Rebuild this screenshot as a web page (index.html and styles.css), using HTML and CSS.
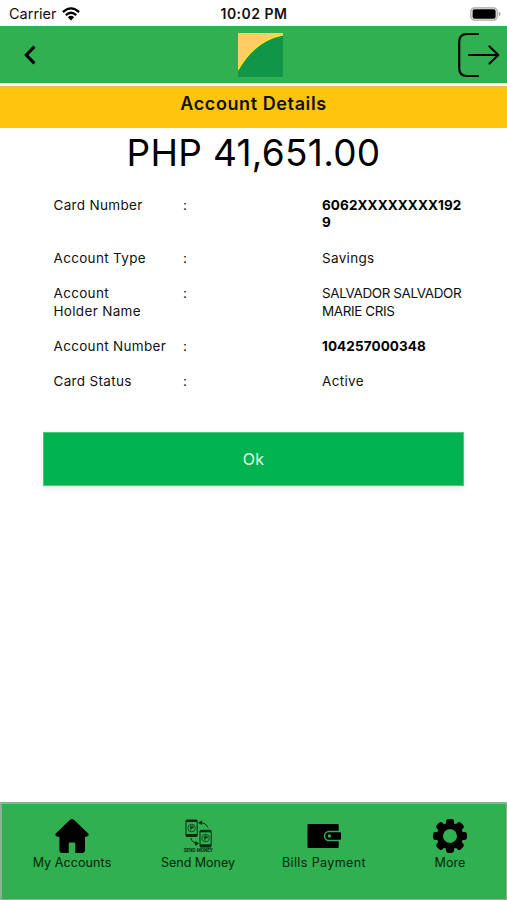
FILE: index.html
```html
<!DOCTYPE html>
<html lang="en">
<head>
<meta charset="utf-8">
<meta name="viewport" content="width=device-width, initial-scale=1">
<title>Account Details</title>
<link rel="stylesheet" href="styles.css">
</head>
<body>
<div class="screen">
  <div class="status">
    <div class="carrier"><span>Carrier</span>
      <svg class="wifi" viewBox="0 0 18 14" width="18" height="14"><g fill="none" stroke="#000" stroke-width="2.3"><path d="M.9 5.2Q9-2.4 17.1 5.2"/><path d="M3.8 8.2Q9 3.4 14.2 8.2"/></g><path d="M5.8 10.2Q9 7.5 12.2 10.2L9 13.5Z"/></svg>
    </div>
    <div class="clock">10:02 PM</div>
    <svg class="battery" viewBox="0 0 31 14" width="31" height="14"><rect x=".8" y=".8" width="26.4" height="12.4" rx="3.6" fill="#eee" stroke="#a9a9a9" stroke-width="1.2"/><rect x="2.6" y="2.2" width="23" height="9.6" rx="1.8"/><path d="M28.6 4.6Q30.6 5.2 30.6 7T28.6 9.4Z" fill="#a9a9a9"/></svg>
  </div>
  <header class="topbar">
    <svg class="back" viewBox="0 0 12 20" width="12" height="20"><path d="M10.4 1.6 2.3 10 10.4 18.4" fill="none" stroke="#000" stroke-width="3.1"/></svg>
    <svg class="logo" viewBox="0 0 45 45" width="45" height="45"><path fill="#fc6" d="M0 1H45V3C24 7 10 20 0 38Z"/><path fill="#119548" d="M45 3C24 7 10 20 0 38V45H45Z"/><path fill="none" stroke="#f5ee16" stroke-width="1.4" d="M45 2.8C24 7 10 20 0 38"/></svg>
    <svg class="logout" viewBox="0 0 42 46" width="42" height="46"><g fill="none" stroke="#000" stroke-width="2.2" stroke-linecap="round" stroke-linejoin="round"><path d="M20 2H9Q1.2 2 1.2 10V36Q1.2 44 9 44H20"/><path d="M11 23H40M31.5 14.5 40.3 23 31.5 31.5"/></g></svg>
  </header>
  <h1 class="title">Account Details</h1>
  <main>
    <div class="amount">PHP 41,651.00</div>
    <dl class="details">
      <div class="row"><dt>Card Number</dt><span>:</span><dd class="strong card">6062XXXXXXXX192<br>9</dd></div>
      <div class="row"><dt>Account Type</dt><span>:</span><dd>Savings</dd></div>
      <div class="row"><dt>Account<br>Holder Name</dt><span>:</span><dd class="caps">SALVADOR SALVADOR<br>MARIE CRIS</dd></div>
      <div class="row"><dt>Account Number</dt><span>:</span><dd class="strong number">104257000348</dd></div>
      <div class="row"><dt>Card Status</dt><span>:</span><dd>Active</dd></div>
    </dl>
    <button class="ok">Ok</button>
  </main>
  <nav class="tabs">
    <a class="tab"><svg viewBox="0 0 34 34" width="34" height="34"><path d="M17 0Q18.2 0 19.2 1L33.2 14.4Q34.5 16.8 32 17.6L30 18V31Q30 34 27 34H20.3V25Q20.3 23.6 19 23.6H15Q13.7 23.6 13.7 25V34H7Q4.4 34 4.4 31V18L2 17.6Q-.5 16.8.8 14.4L14.8 1Q15.8 0 17 0Z"/></svg><span>My Accounts</span></a>
    <a class="tab"><svg viewBox="0 0 34 34" width="34" height="34">
      <g stroke="#062c10" fill="none"><rect x="5" y="1" width="11.2" height="16.5" rx="1"/><path d="M5 2H16" stroke-width="2"/><path d="M5 16.5H16" stroke-width="3"/><rect x="19" y="11.3" width="11.2" height="16.5" rx="1"/><path d="M19 12.3H30" stroke-width="2"/><path d="M19 26.8H30" stroke-width="3"/><circle cx="10.6" cy="9" r="3.8" stroke-width=".7"/><circle cx="24.6" cy="19" r="3.8" stroke-width=".7"/><path d="M9.8 11.5V6.8H11.4Q12.8 8.2 11.3 9.3H9.8M8.7 8.2H13M23.8 21.5V16.8H25.4Q26.8 18.2 25.3 19.3H23.8M22.7 18.2H27" stroke-width=".8"/><path d="M18 3.7Q24 3 27 8.5M17 24.5Q11 24 9.8 19"/></g><path d="M17 3.7 21 1.5V6ZM18 24.6 14 22V27Z" fill="#062c10"/><text x="2.7" y="33.1" class="tiny" textLength="29" lengthAdjust="spacingAndGlyphs">SEND MONEY</text></svg><span class="send">Send Money</span></a>
    <a class="tab"><svg viewBox="0 0 34 34" width="34" height="34"><path d="M1.5 5H30.5Q31.7 5 31.7 6.2V11.8H22A5.2 5.2 0 0 0 22 22.2H31.7V27.8Q31.7 29 30.5 29H1.5Q.5 29 .5 28V6Q.5 5 1.5 5Z"/><path fill-rule="evenodd" d="M22 13.2H33Q34 13.2 34 14.2V19.8Q34 20.8 33 20.8H22A3.8 3.8 0 0 1 22 13.2ZM22.4 15.3A1.7 1.7 0 1 0 22.4 18.7 1.7 1.7 0 0 0 22.4 15.3Z"/></svg><span class="bills">Bills Payment</span></a>
    <a class="tab"><svg viewBox="0 0 34 34" width="34" height="34"><g id="teeth"><rect x="13" y="0" width="8" height="9" rx="2.4"/><rect x="13" y="25" width="8" height="9" rx="2.4"/><rect x="0" y="13" width="9" height="8" rx="2.4"/><rect x="25" y="13" width="9" height="8" rx="2.4"/></g><use href="#teeth" transform="rotate(45 17 17)"/><circle cx="17" cy="17" r="10" fill="none" stroke="#000" stroke-width="6.4"/><circle cx="17" cy="17" r="6.8" fill="#30b050"/></svg><span class="more">More</span></a>
  </nav>
</div>
</body>
</html>
```
FILE: styles.css
```css
* { box-sizing: border-box; }
body { margin: 0; background: #fff; color: #111; font-family: Inter, "Liberation Sans", sans-serif; }
.screen { width: 507px; height: 900px; display: flex; flex-direction: column; overflow: hidden; }
.status { height: 26px; display: grid; grid-template-columns: 1fr auto 1fr; align-items: center; padding: 1px 8px 0 9px; font-size: 14.5px; }
.carrier { display: flex; align-items: center; gap: 5px; }
.clock { font-weight: 600; font-size: 14px; letter-spacing: .5px; }
.battery { justify-self: end; margin-right: -2px; }
.topbar { height: 57px; background: #30b050; display: flex; align-items: center; justify-content: space-between; padding: 0 7px 0 24px; }
.logo { margin-left: 27px; }
.title { margin: 3px 0 0; height: 42px; background: #ffc40d; border-top: 1px solid #e8c050; text-align: center; font-size: 18px; line-height: 34px; font-weight: 600; letter-spacing: .6px; }
main { flex: 1; display: flex; flex-direction: column; padding: 0 43px; }
.amount { text-align: center; font-size: 37px; line-height: 50px; height: 60px; letter-spacing: .3px; margin: 0; color: #000; }
.details { margin: 0 0 0 10.5px; display: flex; flex-direction: column; gap: 18px; padding-top: 9px; font-size: 13.5px; line-height: 17.4px; letter-spacing: .32px; }
.row { display: grid; grid-template-columns: 129.5px 139px 1fr; white-space: nowrap; }
dd { margin: 0; }
.caps { letter-spacing: -.4px; }
.strong { font-weight: 700; color: #000; }
.card { letter-spacing: .1px; }
.number { letter-spacing: .1px; }
.ok { margin: 41px 0 0; height: 54px; border: 1px solid #4cc77e; background: #00b250; color: #e5ffe9; font: 16px Inter, sans-serif; letter-spacing: .2px; box-shadow: 0 2px 6px rgb(0 0 0 / 10%); }
.tabs { height: 98px; background: #30b050; border: 2px solid #8faf93; border-width: 2px 1px 1px 2px; display: grid; grid-template-columns: repeat(4, 126px); padding: 15px 0 0 7px; }
.tab { display: flex; flex-direction: column; align-items: center; gap: 1px; font-size: 12.5px; line-height: 18px; letter-spacing: .1px; color: #06250e; white-space: nowrap; }
.send { letter-spacing: 0; }
.bills { letter-spacing: .4px; }
.tiny { font: 700 4.5px Roboto, sans-serif; letter-spacing: 0; fill: #062c10; }
```
